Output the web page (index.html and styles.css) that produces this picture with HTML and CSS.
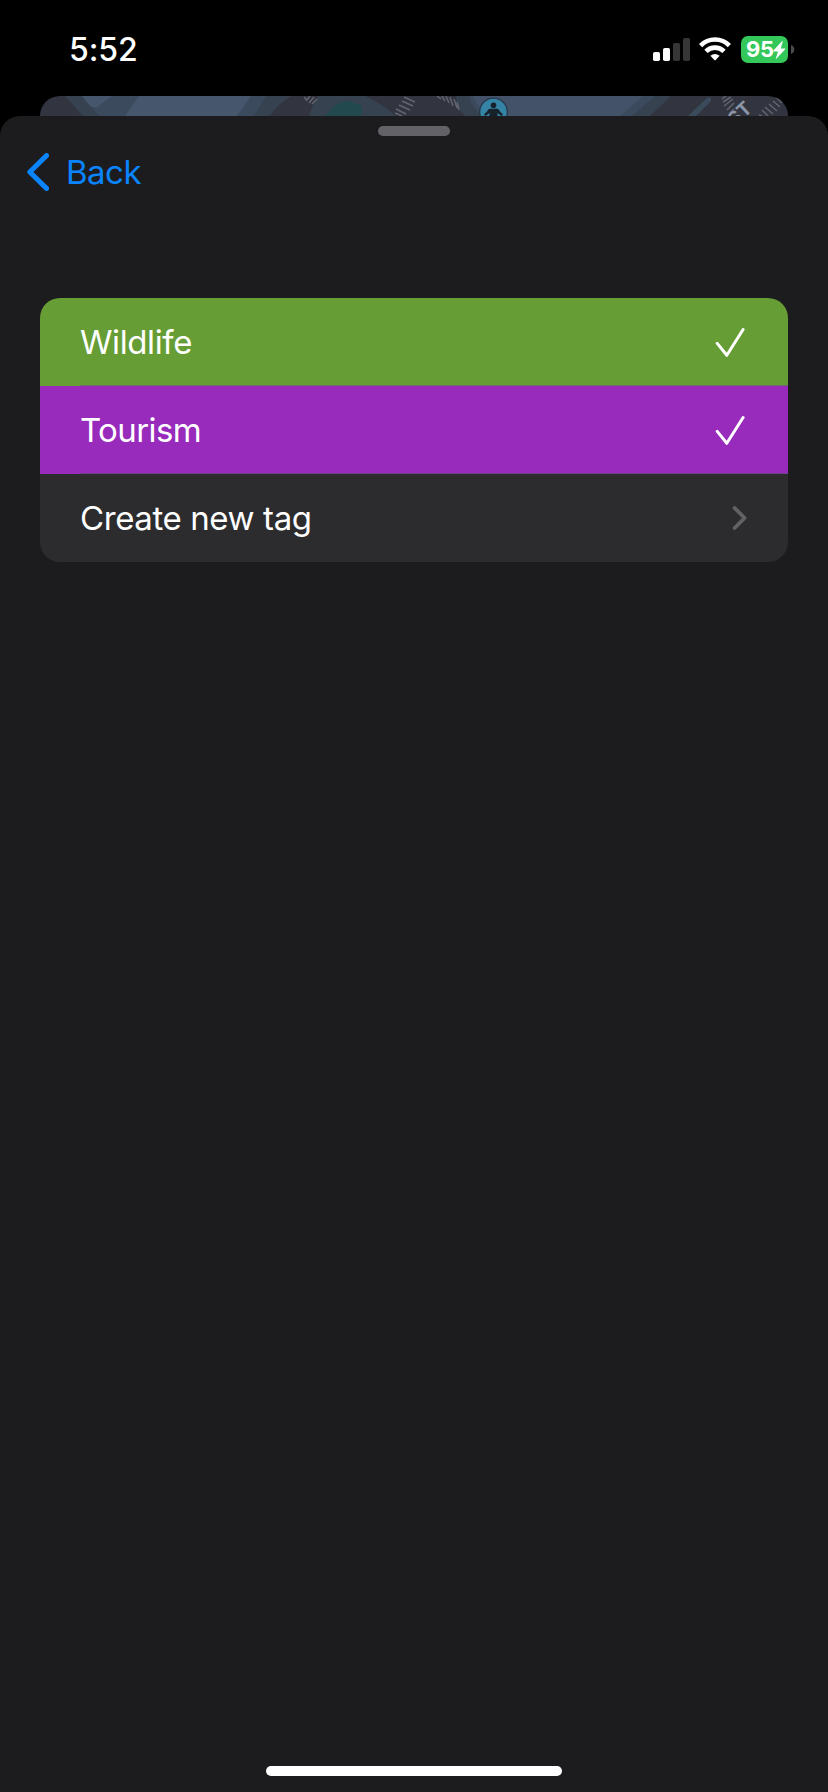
FILE: index.html
```html
<!DOCTYPE html>
<html lang="en">
<head>
<meta charset="utf-8">
<title>Tags</title>
<link rel="stylesheet" href="styles.css">
</head>
<body>
<div class="screen">
  <header class="status">
    <span class="time">5:52</span>
    <div class="indicators">
      <svg class="signal" width="37" height="23" viewBox="0 0 37 23">
        <rect y="14" width="7" height="9" rx="1.8" fill="#fff"/>
        <rect x="10" y="10" width="7" height="13" rx="1.8" fill="#fff"/>
        <rect x="20" y="5" width="7" height="18" rx="1.8" fill="#363636"/>
        <rect x="30" width="7" height="23" rx="1.8" fill="#363636"/>
      </svg>
      <svg class="wifi" width="32" height="24" viewBox="0 0 32 24">
        <g fill="none" stroke="#fff" stroke-width="4.6">
          <path d="M1.6 8.6C9.4.5 22.6.5 30.4 8.6"/>
          <path d="M7 14.4C12 9.4 20 9.4 25 14.4"/>
        </g>
        <path d="M11.4 18.8Q16 15.2 20.6 18.8L16.7 22.9Q16 23.6 15.3 22.9Z" fill="#fff"/>
      </svg>
      <div class="battery">
        <span class="level">95</span>
        <svg class="bolt" width="13" height="18" viewBox="0 0 13 18"><path d="M9.2 0L.2 9.7Q0 10.4.7 10.4H5L2.8 17.5Q3 18 3.6 17.5L12.4 8.1Q12.6 7.4 11.9 7.4H7.8L9.8.5Z" fill="#fff"/></svg>
      </div>
      <svg class="nub" width="4" height="9" viewBox="0 0 4 9"><path d="M0 0Q3.3 1.3 3.3 4.5T0 9Z" fill="#4b4b4d"/></svg>
    </div>
  </header>
  <svg class="map" width="748" height="20" viewBox="0 0 748 20">
    <rect width="748" height="20" fill="#32353f"/>
    <path d="M25 0H243L229 20H43Z" fill="#364250"/>
    <path d="M42 0H226L214 20H59Z" fill="#3b4a5d"/>
    <path d="M42 0H72L57 11H51ZM99 0H211L197 20H85Z" fill="#46566c"/>
    <path d="M230 0H252Q238 7 230 20H214Z" fill="#364250"/>
    <path d="M278 0H325Q343 8 356 20H269Q273 8 278 0Z" fill="#364250"/>
    <path d="M285 20L292 12Q300 4 309 5L321 9Q323 12 321 20Z" fill="#22494d"/>
    <path d="M416 0H631L610 20H425Q416 12 416 0Z" fill="#364250"/>
    <path d="M429 0H615L592 20H445Q431 12 429 0Z" fill="#3b4a5d"/>
    <path d="M433 0H603L580 20H451Q437 12 433 0Z" fill="#445269"/>
    <path d="M648 20L667 2Q672 0 671 5L656 20Z" fill="#3a4c5b"/>
    <g stroke="#626570" stroke-width="1.5">
      <path d="M264 1L267 4M270 0L266 5M274 1L269 7M277 3L272 8"/>
      <path d="M364 1L375 6M362 5L373 10M359 9L370 14M356 13L366 18M355 17L362 20"/>
      <path d="M397 0L401 3M402 0L405 5M406 0L409 7M410 1L413 10M414 3L417 12M417 6L419 14"/>
      <path d="M682 3L686 0M683 6L691 1M684 10L693 3M687 14L694 7M690 17L694 13"/>
      <path d="M719 19L722 20M722 14L728 20M725 11L733 18M729 8L737 15M733 5L740 11M736 1L742 7"/>
    </g>
    <circle cx="453.5" cy="16" r="14.5" fill="#263a4c"/>
    <circle cx="453.5" cy="16" r="13.2" fill="#3583a5"/>
    <circle cx="453.5" cy="9.3" r="2.8" fill="#17212b"/>
    <path d="M450 12.8H457Q459 12.8 460 15.5L463 18.5L461.5 20L457.5 17V20H449.5V17L445.5 20L444 18.5L447 15.5Q448 12.8 450 12.8Z" fill="#17212b"/>
    <text class="street" transform="translate(695 31) rotate(-43)">ST</text>
  </svg>
  <main class="sheet">
    <div class="grabber"></div>
    <nav class="nav">
      <svg width="22" height="38" viewBox="0 0 22 38"><path d="M19.5 2.6L2.8 19L19.5 35.4" fill="none" stroke="#0a84ff" stroke-width="5" stroke-linecap="round" stroke-linejoin="round"/></svg>
      <span class="back">Back</span>
    </nav>
    <ul class="list">
      <li class="row wildlife"><span class="w1">Wildlife</span>
        <svg width="30" height="30" viewBox="0 0 30 30"><path d="M2.2 16.4L11.8 28.3L28.1 2.5" fill="none" stroke="#fff" stroke-width="3" stroke-linecap="round" stroke-linejoin="round"/></svg></li>
      <li class="row tourism"><span class="w2">Tourism</span>
        <svg width="30" height="30" viewBox="0 0 30 30"><path d="M2.2 16.4L11.8 28.3L28.1 2.5" fill="none" stroke="#fff" stroke-width="3" stroke-linecap="round" stroke-linejoin="round"/></svg></li>
      <li class="row create"><span class="w3">Create new tag</span>
        <svg width="15" height="24" viewBox="0 0 15 24"><path d="M2.6 2L12.6 12L2.6 22" fill="none" stroke="#626265" stroke-width="3.8" stroke-linecap="round" stroke-linejoin="round"/></svg></li>
    </ul>
    <div class="home"></div>
  </main>
</div>
</body>
</html>
```
FILE: styles.css
```css
* { box-sizing: border-box; }
body { margin: 0; background: #000; font-family: Inter, "Liberation Sans", sans-serif; color: #fff; }
svg { display: block; flex: none; }
.screen { width: 828px; height: 1792px; display: flex; flex-direction: column; overflow: hidden; background: #000; }
.status { height: 96px; padding: 30px 33px 0 69px; display: flex; justify-content: space-between; align-items: flex-start; }
.time { font-size: 32px; line-height: 39px; font-weight: 500; letter-spacing: -0.1px; }
.indicators { display: flex; align-items: flex-start; padding-top: 6px; }
.signal { margin: 2px 9px 0 0; }
.wifi { margin: 1px 10px 0 0; }
.battery { width: 47px; height: 27px; border-radius: 7px; background: #34c759; display: flex; align-items: center; padding-left: 5px; }
.level { width: 27px; font-size: 22px; line-height: 27px; font-weight: 700; letter-spacing: -0.3px; }
.bolt { margin-top: 1px; }
.nub { margin: 9px 0 0 3px; }
.map { margin-left: 40px; border-radius: 20px 20px 0 0; }
.street { font-size: 19px; font-weight: 700; fill: #8c95a8; }
.sheet { flex: 1; background: #1c1c1e; border-radius: 20px 20px 0 0; display: flex; flex-direction: column; align-items: center; padding: 10px 40px 16px; }
.grabber { width: 72px; height: 10px; border-radius: 5px; background: #636367; }
.nav { align-self: flex-start; margin: 16px 0 0 -13px; height: 40px; display: flex; align-items: center; gap: 17px; color: #0a84ff; }
.back, .row { font-size: 33px; line-height: 40px; }
.back { letter-spacing: -0.5px; }
.list { width: 748px; margin: 106px 0 0; padding: 0; list-style: none; border-radius: 20px; overflow: hidden; }
.row { height: 88px; display: flex; align-items: center; justify-content: space-between; padding: 0 43px 0 40px; position: relative; }
.wildlife { background: #669d34; }
.tourism { background: #982abc; }
.create { background: #2c2c2e; padding-right: 41px; }
.wildlife::after, .tourism::after { content: ""; position: absolute; left: 40px; right: 0; bottom: 0; height: 1px; background: #6b6b70; }
.tourism::after { background: #71408a; }
.w1 { letter-spacing: -0.4px; }
.w2 { letter-spacing: -0.6px; }
.w3 { letter-spacing: -0.4px; }
.home { width: 296px; height: 10px; border-radius: 5px; background: #fff; margin-top: auto; }
```
